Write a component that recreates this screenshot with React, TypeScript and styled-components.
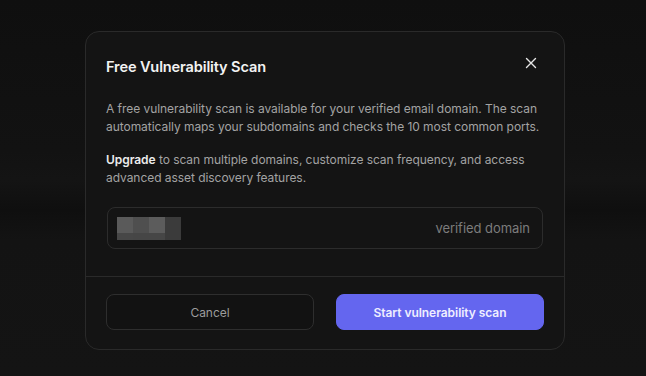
import React from "react"
import styled, { createGlobalStyle } from "styled-components"

const GlobalStyle = createGlobalStyle`
  html, body {
    margin: 0;
    padding: 0;
    height: 100%;
  }
  body {
    background: #121212;
    font-family: Inter, "Noto Sans", sans-serif;
    -webkit-font-smoothing: antialiased;
  }
  #root {
    height: 100%;
  }
`

const Backdrop = styled.div`
  width: 646px;
  height: 376px;
  box-sizing: border-box;
  padding-top: 31px;
  display: flex;
  justify-content: center;
  align-items: flex-start;
  background:
    linear-gradient(
      180deg,
      #0f0f0f 0px,
      #121212 150px,
      #141414 180px,
      #0f0f0f 210px,
      #131313 240px,
      #141414 376px
    );
`

const Modal = styled.div`
  width: 480px;
  margin-left: 4px;
  box-sizing: border-box;
  background: #141414;
  border: 1px solid #2a2a2a;
  border-radius: 14px;
  display: flex;
  flex-direction: column;
`

const Header = styled.div`
  display: flex;
  align-items: center;
  justify-content: space-between;
  padding: 25px 20px 0 20px;
`

const Title = styled.h2`
  margin: 0;
  font-size: 14.6px;
  line-height: 20px;
  font-weight: 600;
  color: #f2f2f2;
  letter-spacing: -0.15px;
`

const CloseButton = styled.button`
  background: none;
  border: none;
  padding: 0;
  width: 14px;
  height: 14px;
  margin-right: 6px;
  margin-top: -8px;
  color: #e6e6e6;
  display: flex;
  align-items: center;
  justify-content: center;
  cursor: pointer;
`

const Body = styled.div`
  display: flex;
  flex-direction: column;
  padding: 23px 20px 27px 20px;
  border-bottom: 1px solid #2a2a2a;
`

const Paragraph = styled.p<{ $gap?: number }>`
  margin: 0 0 ${(p) => p.$gap ?? 0}px 0;
  font-size: 12px;
  line-height: 18px;
  color: #a3a3a3;
  letter-spacing: -0.05px;
  white-space: nowrap;

  strong {
    color: #ececec;
    font-weight: 600;
  }
`

const DomainField = styled.div`
  height: 42px;
  box-sizing: border-box;
  border: 1px solid #2c2c2c;
  border-radius: 8px;
  display: flex;
  align-items: center;
  justify-content: space-between;
  padding: 0 12px 0 9px;
  margin: 0 1px;
`

const Redacted = styled.div`
  display: grid;
  grid-template-columns: 16px 16px 16px 16px;
  grid-template-rows: 16px 7px;
`

const Cell = styled.div<{ $c: string; $span?: boolean; $rows?: boolean }>`
  background: ${(p) => p.$c};
  ${(p) => (p.$span ? "grid-column: span 2;" : "")}
  ${(p) => (p.$rows ? "grid-row: span 2;" : "")}
`

const FieldLabel = styled.span`
  font-size: 13px;
  color: #7c7c7c;
  letter-spacing: -0.05px;
`

const Footer = styled.div`
  display: flex;
  gap: 22px;
  padding: 17px 20px 19px 20px;
`

const Button = styled.button<{ $primary?: boolean }>`
  flex: 1;
  height: 36px;
  border-radius: 8px;
  font-family: inherit;
  font-size: 12px;
  cursor: pointer;
  border: 1px solid ${(p) => (p.$primary ? "#6466ef" : "#2e2e2e")};
  background: ${(p) => (p.$primary ? "#6466ef" : "#121212")};
  color: ${(p) => (p.$primary ? "#eeeeff" : "#9c9c9c")};
  font-weight: ${(p) => (p.$primary ? 600 : 400)};
  letter-spacing: -0.05px;
`

export default function App() {
  return (
    <>
      <GlobalStyle />
      <Backdrop>
        <Modal>
          <Header>
            <Title>Free Vulnerability Scan</Title>
            <CloseButton aria-label="Close">
              <svg width="12" height="12" viewBox="0 0 12 12" fill="none">
                <path
                  d="M1.5 1.5L10.5 10.5M10.5 1.5L1.5 10.5"
                  stroke="currentColor"
                  strokeWidth="1.4"
                  strokeLinecap="round"
                />
              </svg>
            </CloseButton>
          </Header>
          <Body>
            <Paragraph $gap={15}>
              A free vulnerability scan is available for your verified email
              domain. The scan
              <br />
              automatically maps your subdomains and checks the 10 most common
              ports.
            </Paragraph>
            <Paragraph $gap={20}>
              <strong>Upgrade</strong> to scan multiple domains, customize scan
              frequency, and access
              <br />
              advanced asset discovery features.
            </Paragraph>
            <DomainField>
              <Redacted>
                <Cell $c="#5a5a5a" />
                <Cell $c="#4f4f4f" />
                <Cell $c="#5c5c5c" />
                <Cell $c="#3b3b3b" $rows />
                <Cell $c="#474747" />
                <Cell $c="#464646" $span />
              </Redacted>
              <FieldLabel>verified domain</FieldLabel>
            </DomainField>
          </Body>
          <Footer>
            <Button>Cancel</Button>
            <Button $primary>Start vulnerability scan</Button>
          </Footer>
        </Modal>
      </Backdrop>
    </>
  )
}
